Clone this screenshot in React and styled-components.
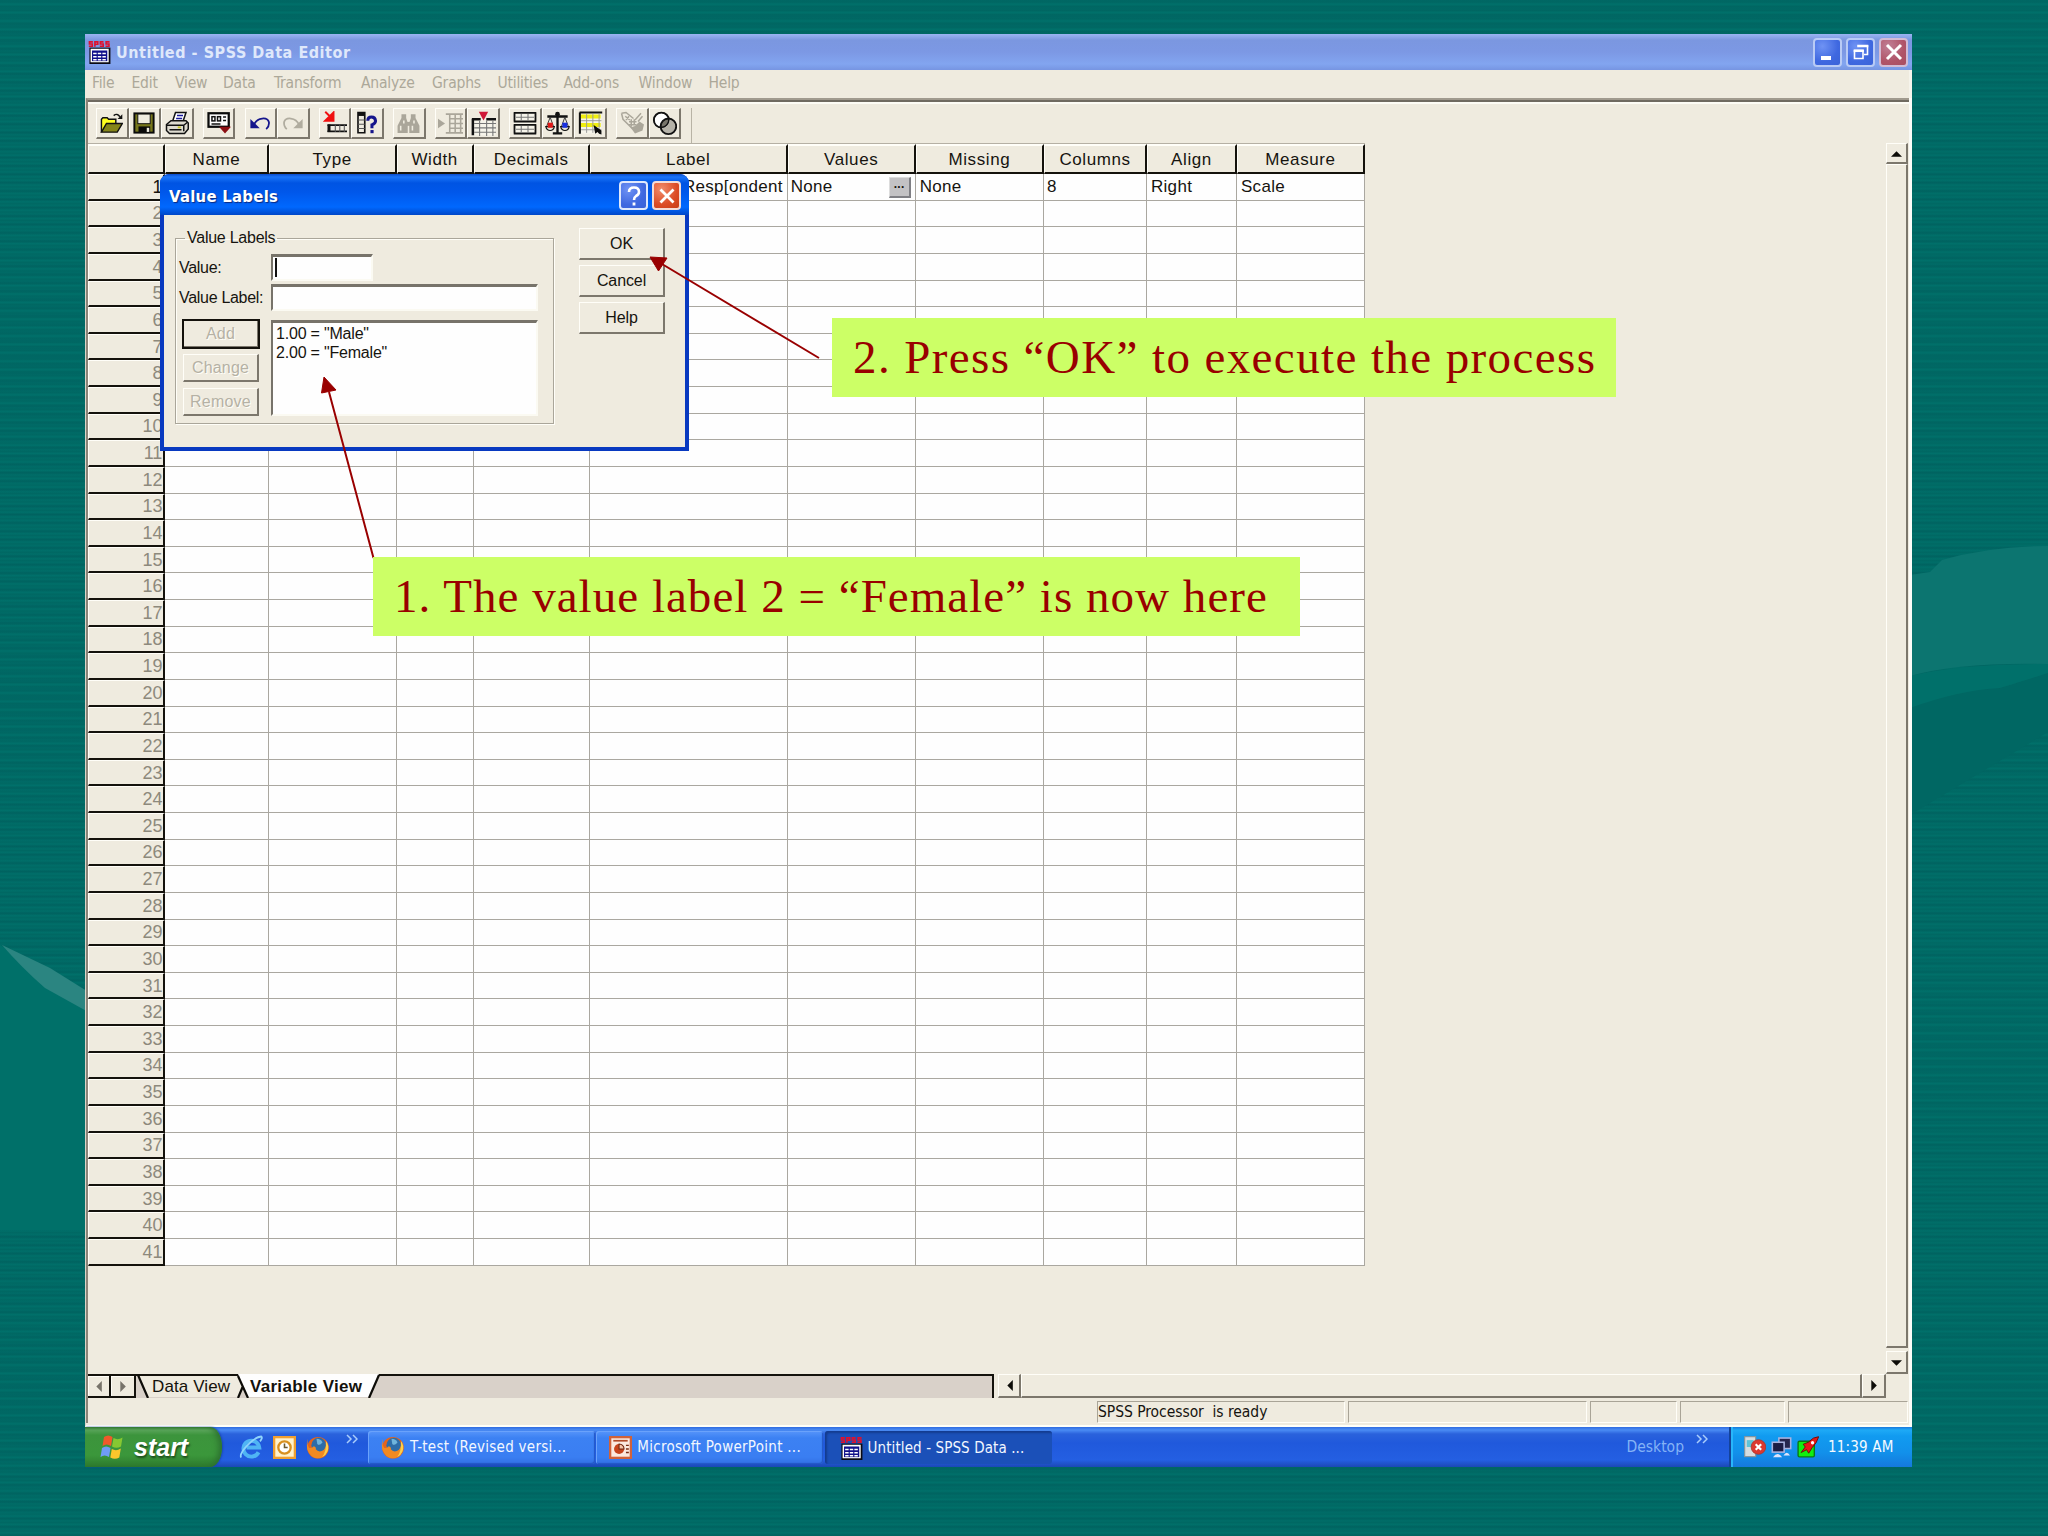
import React from 'react'
import styled, { createGlobalStyle, css } from 'styled-components'

const UI = '"DejaVu Sans Condensed", "DejaVu Sans", "Noto Sans", sans-serif'
const ARIAL = '"Liberation Sans", Arial, sans-serif'
const FACE = '#efebdf'

const GlobalStyle = createGlobalStyle`
  * { box-sizing: border-box; }
  body { margin: 0; background: #006b66; overflow: hidden; }
`

const raised = css`
  background: ${FACE};
  border: solid;
  border-width: 1px 2px 2px 1px;
  border-color: #fffef8 #7c776c #7c776c #fffef8;
`

const sunken = css`
  background: #fefefe;
  border: solid;
  border-width: 3px 2px 2px 2px;
  border-color: #77736a #fbfaf2 #fbfaf2 #77736a;
`

/* ---------- slide ---------- */

const Slide = styled.div`
  position: relative;
  width: 2048px;
  height: 1536px;
  padding: 34px 136px 0 85px;
  overflow: hidden;
  background:
    repeating-linear-gradient(180deg, rgba(0, 92, 92, 0.45) 0, rgba(0, 92, 92, 0) 3px 5.5px, rgba(0, 92, 92, 0.45) 8.3px),
    repeating-linear-gradient(180deg, #00706a 0, #006863 2.1px, #00706a 4.2px);
`

const Swoosh = styled.svg`
  position: absolute;
  left: 0;
  top: 0;
`

const Screen = styled.div`
  position: relative;
  width: 1827px;
  height: 1433px;
  display: flex;
  flex-direction: column;
`

/* ---------- main window ---------- */

const TitleBar = styled.div`
  height: 36px;
  display: flex;
  align-items: center;
  gap: 4px;
  padding: 0 4px 0 3px;
  background: linear-gradient(#9ab4f2 0, #7b97e0 6px, #7c98e4 18px, #82a5f0 30px, #7795e2 36px);
`

const TitleText = styled.div`
  flex: 1;
  padding-left: 1px;
  font: bold 16px ${UI};
  letter-spacing: 0.55px;
  color: #dfe8fb;
`

const CaptionButton = styled.div`
  width: 29px;
  height: 29px;
  border-radius: 4px;
  border: 2px solid ${p => p.$edge || '#b9cbf5'};
  background: ${p => p.$fill};
  display: flex;
  align-items: center;
  justify-content: center;
`

const MenuBar = styled.div`
  height: 28px;
  padding-bottom: 2px;
  background: ${FACE};
  display: flex;
  align-items: center;
  border-right: 3px solid #f6f4ec;
`

const MenuItem = styled.div`
  width: ${p => p.$w}px;
  font: 15.5px ${UI};
  letter-spacing: -0.2px;
  color: #aca899;
  &:first-child { margin-left: 7px; }
`

const Frame = styled.div`
  height: 1329px;
  background: ${FACE};
  border-left: 1px solid #d9d5c8;
  border-right: 3px solid #fcfcf8;
  border-bottom: 2px solid #fffff8;
  display: flex;
  flex-direction: column;
`

const Inner = styled.div`
  border-top: 2px solid #a09a8e;
  border-left: 2px solid #8a8478;
  box-shadow: inset 0 2px 0 #6f6a60, inset 0 4px 0 #fdfcf5;
  height: 1325px;
  display: flex;
  flex-direction: column;
`

const Toolbar = styled.div`
  height: 44px;
  padding: 8px 0 0 8px;
  display: flex;
`

const ToolGroups = styled.div`
  display: flex;
  gap: 9.1px;
  width: 596px;
  height: 36px;
  border-right: 1px solid #b8b3a5;
`

const ToolGroup = styled.div`
  display: flex;
`

const ToolButton = styled.div`
  ${raised}
  width: 32.6px;
  height: 31px;
  display: flex;
  align-items: center;
  justify-content: center;
`

const Body = styled.div`
  height: 1231px;
  display: flex;
  justify-content: space-between;
`

const Sheet = styled.div`
  width: 1280px;
`

const Row = styled.div`
  display: grid;
  grid-template-columns: 77.3px 103.4px 128px 77px 116px 198px 128px 128.4px 102.9px 90px 128px;
  height: ${p => p.$h}px;
`

const HeadCell = styled.div`
  background: ${FACE};
  border: solid;
  border-width: 2px 2px 2px 1px;
  border-color: #fffef8 #14120c #14120c #fffef8;
  box-shadow: 0 -1px 0 #b5b0a4;
  padding-top: 2px;
  display: flex;
  align-items: center;
  justify-content: center;
  font: 17px ${ARIAL};
  letter-spacing: 0.6px;
  color: #16140f;
`

const RowHead = styled.div`
  background: ${FACE};
  border: solid;
  border-width: 1px 2px 2px 1px;
  border-color: #fffef8 #14120c #14120c #fffef8;
  padding: 1px 1px 0 0;
  display: flex;
  align-items: center;
  justify-content: flex-end;
  font: 18px ${ARIAL};
  letter-spacing: -0.1px;
  color: ${p => (p.$active ? '#16140f' : '#8d897c')};
`

const Cell = styled.div`
  background: #fefefe;
  border-right: 1.5px solid #aaa7a0;
  border-bottom: 1.5px solid #aaa7a0;
  padding: 1px 4px 0 ${p => p.$pad || 3}px;
  display: flex;
  align-items: center;
  justify-content: ${p => (p.$end ? 'flex-end' : 'space-between')};
  font: 17px ${ARIAL};
  letter-spacing: 0.3px;
  color: #16140f;
`

const Ellipsis = styled.div`
  width: 22px;
  height: 21px;
  background: #c3c2c4;
  border: solid;
  border-width: 1px 2px 2px 1px;
  border-color: #dcdcdc #7f7f84 #7f7f84 #dcdcdc;
  font: bold 12px/13px ${ARIAL};
  text-align: center;
`

const VScroll = styled.div`
  width: 22px;
  margin: -1px 1px 0 0;
  display: flex;
  flex-direction: column;
`

const ScrollPart = styled.div`
  ${raised}
  display: flex;
  align-items: center;
  justify-content: center;
  width: ${p => (p.$w ? p.$w + 'px' : 'auto')};
  height: ${p => (p.$h ? p.$h + 'px' : 'auto')};
  flex: ${p => (p.$grow ? 1 : 'none')};
  margin-bottom: ${p => p.$mb || 0}px;
`

const SheetBar = styled.div`
  height: 24px;
  display: flex;
`

const NavButton = styled.div`
  width: ${p => p.$w}px;
  height: 24px;
  background: ${FACE};
  border: solid #14120c;
  border-width: 2px 2px 2px 0;
  box-shadow: inset 1px 1px 0 #fffef8;
  display: flex;
  align-items: center;
  justify-content: center;
`

const TabStrip = styled.div`
  position: relative;
  width: 858px;
  background: #d9d1c9;
  border-top: 2px solid #14120c;
  border-right: 2px solid #14120c;
  display: flex;
`

const TabShapes = styled.svg`
  position: absolute;
  left: 0;
  top: -2px;
`

const Tab = styled.div`
  position: relative;
  padding-left: ${p => p.$pad}px;
  width: ${p => p.$w}px;
  font: ${p => (p.$active ? 'bold' : 'normal')} 17px/22px ${ARIAL};
  letter-spacing: ${p => (p.$active ? 0.3 : 0.1)}px;
  white-space: nowrap;
  color: #14120c;
`

const HScroll = styled.div`
  display: flex;
  margin-left: 4px;
  width: 888px;
`

const StatusBar = styled.div`
  margin-top: 3px;
  padding-left: 1009px;
  display: flex;
  gap: 3px;
  height: 22px;
`

const StatusPanel = styled.div`
  width: ${p => p.$w}px;
  border: solid;
  border-width: 1.5px;
  border-color: #a9a497 #fffef8 #fffef8 #a9a497;
  font: 15.5px/20px ${UI};
  letter-spacing: -0.05px;
  color: #16140f;
  white-space: pre;
`

/* ---------- taskbar ---------- */

const TaskBar = styled.div`
  height: 40px;
  display: flex;
  background: linear-gradient(#2f6be0 0, #4a8cf4 3px, #2a62dc 7px, #2059dc 16px, #245fe2 33px, #1b48b4 40px);
`

const StartButton = styled.div`
  width: 137px;
  padding: 0 0 0 14px;
  display: flex;
  align-items: center;
  gap: 7px;
  border-radius: 0 12px 12px 0 / 0 20px 20px 0;
  background: linear-gradient(#337a33 0, #5ba65b 3px, #3c943c 8px, #3b973b 28px, #2d7a2d 40px);
  box-shadow: inset -5px 0 6px -2px #2c6f2f, 1px 0 2px #1a46ac;
  font: italic bold 25px ${ARIAL};
  color: #fff;
  text-shadow: 1px 2px 2px #1d4c1d;
`

const QuickLaunch = styled.div`
  width: 146px;
  padding-left: 17px;
  display: flex;
  align-items: center;
  gap: 10px;
`

const Chevrons = styled.svg`
  margin: 0 0 16px ${p => p.$ml}px;
`

const Task = styled.div`
  width: 227px;
  height: 33px;
  margin: 4px 1.3px 0 0;
  padding: ${p => (p.$active ? '1px 0 0 15px' : '0 0 1px 13px')};
  display: flex;
  align-items: center;
  gap: 5px;
  border-radius: 3px;
  background: ${p => (p.$active ? '#1b50b8' : 'linear-gradient(#5795fa 0, #3c81f3 7px, #3a7ef2 26px, #3270e4 33px)')};
  box-shadow: ${p => (p.$active ? 'inset 2px 2px 2px #143c90' : 'inset 1px 1px 0 #6aa2fb, inset -1px -1px 1px #2357c6')};
  font: 15px ${UI};
  letter-spacing: ${p => p.$ls || 0.28}px;
  color: #f2f7ff;
  white-space: nowrap;
`

const DeskLabel = styled.div`
  flex: 1;
  display: flex;
  align-items: center;
  justify-content: flex-end;
  padding-right: 21px;
  font: 15.5px ${UI};
  color: #84b3f6;
`

const Tray = styled.div`
  width: 183px;
  display: flex;
  align-items: center;
  gap: 5px;
  padding-left: 13px;
  border-left: 2px solid #14439a;
  background: linear-gradient(#1a78dc 0, #1eaaf6 3px, #119bf0 9px, #1290ea 26px, #1578dc 40px);
  box-shadow: inset 2px 0 0 #28b6fa;
  font: 15px ${UI};
  letter-spacing: 0.2px;
  color: #f4faff;
  white-space: nowrap;
  span { margin-left: 4px; }
`

/* ---------- dialog ---------- */

const Dialog = styled.div`
  position: absolute;
  left: 75px;
  top: 140px;
  width: 529px;
  height: 277px;
  border-radius: 9px 9px 0 0;
  background: #0839c0;
  padding: 0 4px 4px;
`

const DialogTitle = styled.div`
  height: 41px;
  margin: 0 -4px;
  padding: 2px 8px 0 9px;
  display: flex;
  align-items: center;
  gap: 4px;
  border-radius: 9px 9px 0 0;
  background: linear-gradient(#0a4ccc 0, #1a74f8 3px, #0054e3 9px, #0057ea 18px, #0068fe 33px, #0047c8 41px);
  font: bold 16.5px ${UI};
  letter-spacing: 0.3px;
  color: #fff;
  text-shadow: 1px 1px 1px #0a2a80;
  span { flex: 1; padding-top: 2px; }
`

const DialogBody = styled.div`
  height: 232px;
  background: ${FACE};
  display: flex;
  padding: 14px 0 0 11px;
`

const Group = styled.fieldset`
  position: relative;
  width: 379px;
  height: 195px;
  margin: 0 25px 0 0;
  padding: 7px 14px 0 3px;
  border: 1px solid #aaa69a;
  box-shadow: 1px 1px 0 #fffef8, inset 1px 1px 0 #fffef8;
  min-width: 0;
  font: 16px ${ARIAL};
  color: #16140f;

  legend {
    margin-left: 6px;
    padding: 0 2px;
    line-height: 18px;
    letter-spacing: -0.25px;
  }
`

const Field = styled.label`
  display: grid;
  grid-template-columns: 92px auto;
  justify-content: start;
  align-items: center;
  height: 27px;
  margin-bottom: 3px;
  letter-spacing: -0.3px;
`

const TextBox = styled.div`
  ${sunken}
  width: ${p => p.$w}px;
  height: 27px;
  padding: 1px 2px;
`

const Caret = styled.div`
  width: 1.5px;
  height: 19px;
  background: #111;
`

const ListArea = styled.div`
  display: flex;
  gap: 12px;
  margin: 9px 0 0 4px;
`

const ButtonStack = styled.div`
  display: flex;
  flex-direction: column;
  gap: ${p => p.$gap}px;
  margin-top: ${p => p.$mt || 0}px;
`

const Button = styled.div`
  ${raised}
  width: ${p => p.$w || 76}px;
  height: ${p => p.$h || 28}px;
  display: flex;
  align-items: center;
  justify-content: center;
  font: 16px ${ARIAL};
  letter-spacing: ${p => (p.$disabled ? 0.2 : -0.1)}px;
  color: ${p => (p.$disabled ? '#b5b1a4' : '#16140f')};
  text-shadow: ${p => (p.$disabled ? '1px 1px 0 #fffef8' : 'none')};
  outline: ${p => (p.$default ? '2px solid #14120c' : 'none')};
  outline-offset: -1px;
`

const ListBox = styled.div`
  ${sunken}
  width: 267px;
  height: 96px;
  padding: 2px 3px;
  font: 16px/18.5px ${ARIAL};
  letter-spacing: -0.2px;
`

/* ---------- annotations ---------- */

const Callout = styled.div`
  position: absolute;
  left: ${p => p.$x}px;
  top: ${p => p.$y}px;
  width: ${p => p.$w}px;
  height: 79px;
  padding-left: 21px;
  background: #ccff66;
  color: #990000;
  font: 47px/79px "Liberation Serif", serif;
  letter-spacing: ${p => p.$ls}px;
  white-space: nowrap;
`

const Arrows = styled.svg`
  position: absolute;
  left: 0;
  top: 0;
`

/* ---------- icons ---------- */

const Icon = ({ s = 22, children, ...rest }) => (
  <svg width={s} height={s} viewBox="0 0 16 16" {...rest}>
    {children}
  </svg>
)

const Tri = ({ dir, color = '#0d0c08' }) => {
  const d = {
    up: 'M0 8 L5 3 L10 8Z',
    down: 'M0 3 L10 3 L5 8Z',
    left: 'M3 5 L8 0 L8 10Z',
    right: 'M3 0 L8 5 L3 10Z',
  }[dir]
  return (
    <svg width="11" height="11" viewBox="0 0 10 10">
      <path d={d} fill={color} />
    </svg>
  )
}

const SpssIcon = ({ s = 23 }) => (
  <Icon s={s}>
    <path d="M3.4 .6H1v1.5h2v1.6H.6M4.8 4V.6h2v1.7h-2M10.8 .6H8.6v1.5h2v1.6H8.2M15 .6h-2.4v1.5h2v1.6h-2.4" fill="none" stroke="#e0102c" strokeWidth="1.1" />
    <rect x="1" y="4.6" width="14.6" height="11.4" fill="#0a0a14" />
    <rect x="1.8" y="5.4" width="12.6" height="9.4" fill="#fff" />
    <rect x="2.8" y="6.6" width="10.6" height="7.4" fill="#10108a" />
    <path d="M3.6 8.7h9M3.6 10.9h9M3.6 13h9" stroke="#fff" strokeWidth="1.1" strokeDasharray="2.4 .8" />
  </Icon>
)

const OpenIcon = () => (
  <Icon s={23}>
    <path d="M1 14V5l1-1h3l1 1h5v3" fill="#ffff20" stroke="#111" />
    <path d="M1 14l3.5-6H15.5L12 14Z" fill="#85851a" stroke="#111" />
    <path d="M9.5 2.5q2.5-2 4.3.8" fill="none" stroke="#111" />
    <path d="M15.5 1.5v3.3h-3.3z" fill="#111" />
  </Icon>
)

const SaveIcon = () => (
  <Icon>
    <rect x="1" y="1" width="14" height="14" fill="#77771c" stroke="#0a0a0a" strokeWidth="1.4" />
    <rect x="3.5" y="1.5" width="9" height="7" fill="#efece0" stroke="#111" strokeWidth=".7" />
    <rect x="4" y="10.5" width="8.5" height="4.8" fill="#0a0a0a" />
    <rect x="10" y="11.5" width="1.8" height="3" fill="#efece0" />
  </Icon>
)

const PrintIcon = () => (
  <Icon s={24}>
    <path d="M5 7L7 1h7l-2 6Z" fill="#fff" stroke="#111" />
    <path d="M8 3h4M7.4 5h4" stroke="#1a1a9a" />
    <path d="M1 9l3-2.5h10l1.5 1.5v4L13 15H3l-2-2Z" fill="#dedbd0" stroke="#111" />
    <path d="M1 9.5h11.5v4M12.5 9.5L15 7.5M3 12.5h8" fill="none" stroke="#111" />
    <rect x="8.5" y="10.3" width="2" height="1.2" fill="#c8c820" />
  </Icon>
)

const RecallIcon = () => (
  <Icon s={24}>
    <rect x="1" y="1.5" width="13.5" height="9" fill="#fff" stroke="#0a0a0a" strokeWidth="1.5" />
    <rect x="3.3" y="3.8" width="2" height="2.8" fill="none" stroke="#111" />
    <rect x="7" y="3.8" width="2" height="2.8" fill="none" stroke="#111" />
    <path d="M10.7 4h2M10.7 6.3h2M3 8.6h6" stroke="#111" />
    <path d="M8 10.5h8L12 15Z" fill="#8c0f14" />
  </Icon>
)

const UndoIcon = ({ color = '#15158c', flip }) => (
  <Icon style={{ transform: flip ? 'scaleX(-1)' : 'none' }}>
    <path d="M3.5 9.5C6 3.5 13.500 3.500 14.500 7.500Q14.800 10.500 12.500 12.500" fill="none" stroke={color} strokeWidth="1.3" />
    <path d="M1 5v6.800h6.800Z" fill={color} />
  </Icon>
)

const GotoCaseIcon = () => (
  <Icon s={24}>
    <path d="M1.500 .5L6 5M7 1v5.500H1.500Z" stroke="#f01010" strokeWidth="1.300" fill="#f01010" />
    <rect x="3" y="9" width="13" height="5" fill="#efece0" />
    <path d="M3 9.400h13M3 13.600h13" stroke="#111" strokeWidth="1.200" />
    <rect x="3" y="9" width="2" height="5" fill="#111" />
    <path d="M8.200 9v5M11.200 9v5M14.200 9v5" stroke="#555" strokeWidth=".7" />
  </Icon>
)

const VarInfoIcon = () => (
  <Icon s={24}>
    <path d="M2 1h4.500v13.500H2Z" fill="#efece0" stroke="#111" strokeWidth="1.100" />
    <rect x="2" y="1" width="4.500" height="2.300" fill="#111" />
    <path d="M2 6h4.500M2 8.800h4.500M2 11.600h4.500" stroke="#555" strokeWidth=".7" />
    <path d="M8.500 6.500Q8.500 4 11 4t2.700 2.600Q13.700 8.200 11.300 9.200V11.500" stroke="#15158c" strokeWidth="2" fill="none" />
    <rect x="10.300" y="12.700" width="2.100" height="2.100" fill="#15158c" />
  </Icon>
)

const FindIcon = () => (
  <Icon s={25}>
    <path d="M3.500 2h3v2.500l1 3V14H1V9.500L3.500 4.500ZM9.500 2h3v2.500L15 9.500V14H8.500V7.500l1-3Z" fill="#aaa69a" />
    <path d="M7 7h2v2.500H7Z" fill="#aaa69a" />
    <path d="M3 9.500v3M5 6v2M10.500 9.500v3M11.500 6v2" stroke="#efece0" />
  </Icon>
)

const InsertCaseIcon = () => (
  <Icon s={25}>
    <path d="M0 5l4.500 3L0 11Z" fill="#aaa69a" />
    <path d="M5 2h11M7 5h9M7 8h9M7 11h9M5 14h11M7.500 2v12M11 2v12M14.500 2v12" stroke="#aaa69a" strokeWidth="1" />
  </Icon>
)

const InsertVarIcon = () => (
  <Icon s={25}>
    <rect x="1" y="5" width="14.500" height="10.500" fill="#f6f4ea" />
    <path d="M.6 5.200H6.200M9.800 5.200H16M1.200 5v10.500" stroke="#111" strokeWidth="1.600" />
    <path d="M2 8h14M2 10.800h14M2 13.600h14M5.500 6v10M10 6v10M14 6v10" stroke="#777" strokeWidth=".7" />
    <path d="M5 .5h6L8 6Z" fill="#d01838" />
  </Icon>
)

const SplitIcon = () => (
  <Icon s={24}>
    <rect x=".5" y=".8" width="15" height="14.400" fill="#f6f4ea" />
    <path d="M.5 1.200h15M.5 7h15M.5 9.200h15M.5 15h15M1 1v6M1 9v6M15 1v6M15 9v6" stroke="#111" strokeWidth="1.200" />
    <path d="M2 4.100h12M2 12.100h12M5.500 2v4.500M10 2v4.500M5.500 10v4.500M10 10v4.500" stroke="#777" strokeWidth=".7" />
  </Icon>
)

const WeightIcon = () => (
  <Icon s={25}>
    <path d="M8 1v13M1.500 3.500h13M5 14.300h6" stroke="#111" strokeWidth="1.500" />
    <circle cx="8" cy="2" r="1.500" fill="#111" />
    <path d="M3.300 4L1 10M3.300 4l2.200 6M12.700 4l-2.200 6M12.700 4L15 10" stroke="#333" strokeWidth=".6" />
    <path d="M.5 10h5.500q-.5 2.500-2.700 2.500T.5 10ZM10 10h5.500q-.5 2.500-2.700 2.500T10 10Z" fill="#e8e5d8" stroke="#111" strokeWidth=".7" />
    <rect x="1.800" y="7.500" width="3.200" height="3.200" fill="#e01818" />
    <rect x="11.100" y="7.500" width="3.200" height="3.200" fill="#1830e0" />
  </Icon>
)

const SelectIcon = () => (
  <Icon s={25}>
    <rect x="1" y="1" width="14" height="13.500" fill="#f6f4ea" />
    <path d="M1.500 3.500h13M1.500 9h13" stroke="#f0ee10" strokeWidth="2.600" />
    <path d="M1 1h14.500M1.200 1v13.500" stroke="#111" strokeWidth="1.300" />
    <path d="M2 6.200h13M2 12h13M5.500 2v12M9.500 2v12M13.500 2v12" stroke="#999" strokeWidth=".6" />
    <path d="M10 9l5 3.500V15l-1.500-.5-1-1-1.500 1Z" fill="#0a0a0a" />
  </Icon>
)

const LabelsIcon = () => (
  <Icon s={24}>
    <path d="M1 1.500l3-.5 5 4M1 1.500l1 4 6 6M10 6l4-4.500M12 7l3-3.500" stroke="#aaa69a" strokeWidth="1" fill="none" />
    <path d="M7 11l3 4 5-2 1-4-3-2-3 3Z" fill="#aaa69a" />
    <path d="M3.500 3.500l3 2.500M4 6l2-2.500M7.500 5.500v5M9.500 5.500v4M6 7.200h5M6 9.200h5" stroke="#aaa69a" />
  </Icon>
)

const SetsIcon = () => (
  <Icon s={25}>
    <circle cx="6" cy="5.800" r="4.800" fill="#fff" stroke="#111" strokeWidth="1.200" />
    <circle cx="10.500" cy="9.800" r="5" fill="#b5b2a8" stroke="#111" strokeWidth="1.200" />
    <path d="M10.700 5A5 5 0 0 0 5.700 10.500A5 5 0 0 0 10.700 5Z" fill="#77746a" stroke="#111" strokeWidth=".8" />
    <circle cx="6" cy="5.800" r="4.800" fill="none" stroke="#111" strokeWidth=".6" />
  </Icon>
)

const FlagIcon = () => (
  <svg width="28" height="28" viewBox="0 0 28 28">
    <path d="M5 4q4-3 8.500 0l-1.500 9q-4.500-3-8.500 0Z" fill="#f0592a" />
    <path d="M14.500 5q4.500 2.500 9-.5l-1.500 9q-4.500 2.500-9 0Z" fill="#86c832" />
    <path d="M3 15q4-3 8.500 0l-1.500 9q-4.500-3-8.500 0Z" fill="#6f9cf6" />
    <path d="M12.800 16q4.500 2.500 9-.5l-1.500 9q-4.500 2.500-9 0Z" fill="#fbc62c" />
  </svg>
)

const IeIcon = () => (
  <Icon s={24}>
    <path d="M13 11.500A5.300 5.300 0 1 1 13.500 8.300H5" fill="none" stroke="#4fb4f4" strokeWidth="2.600" />
    <path d="M1.500 15C-.5 12.500 9 1.500 14.800 1q1.200.8-.8 3.200" fill="none" stroke="#8fd4fb" strokeWidth="1.200" />
  </Icon>
)

const OutlookIcon = () => (
  <Icon s={23}>
    <rect x=".8" y=".8" width="14.400" height="14.400" fill="#fff2cc" stroke="#f0a030" strokeWidth="1.600" />
    <circle cx="8" cy="8" r="4.300" fill="#fff" stroke="#d89020" strokeWidth="1.600" />
    <path d="M8 5.300V8h2.200" fill="none" stroke="#6b5a30" strokeWidth="1.100" />
  </Icon>
)

const FirefoxIcon = () => (
  <Icon s={24}>
    <circle cx="8" cy="8.500" r="7.200" fill="#e4641c" />
    <circle cx="8.500" cy="6.800" r="4.900" fill="#2d6ca8" />
    <path d="M7 2.500q3 0 4 2.500-2 2.500-3.500 1Z" fill="#6fb4dc" />
    <path d="M1.200 2.500Q.5 6 2 8.500q2 .5 3.200-1Q7 8 6.500 9.500q1.500 2 4 1.200 3-1 2.800-5.700 2 3 .8 6.500-2 4-6.500 4T.8 9.500Q.2 5 1.200 2.500Z" fill="#f18a22" />
    <path d="M13.300 4q2.500 3 1 7-1 2.500-3.500 3.700 3-4 2.500-10.700Z" fill="#fbd04a" />
  </Icon>
)

const PptIcon = () => (
  <Icon s={23}>
    <rect x=".8" y=".8" width="14.400" height="14.400" fill="#fbe9df" stroke="#d0623a" strokeWidth="1.600" />
    <path d="M3 3.300h10" stroke="#b04a28" strokeWidth="1.200" />
    <circle cx="7" cy="9" r="3.500" fill="#c8441c" />
    <path d="M7 9V5.500A3.500 3.500 0 0 1 10.500 9Z" fill="#f6c4a8" stroke="#6b2410" strokeWidth=".7" />
    <path d="M11.800 6.500h2M11.800 9h2M11.800 11.500h2" stroke="#7a2d14" />
  </Icon>
)

const SecurityIcon = () => (
  <Icon s={22}>
    <rect x=".5" y=".5" width="8" height="14.500" fill="#d6dde0" stroke="#8a9498" strokeWidth=".8" />
    <rect x="2" y="3" width="5" height="5" fill="#5fc4d8" />
    <circle cx="10.500" cy="8" r="5.300" fill="#dc3830" stroke="#a8382e" strokeWidth=".6" />
    <path d="M8.500 6l4 4M12.500 6l-4 4" stroke="#fff" strokeWidth="1.600" />
  </Icon>
)

const NetworkIcon = () => (
  <Icon s={21}>
    <rect x="6" y=".8" width="9" height="8" fill="#26264e" stroke="#a8b2e0" strokeWidth="1.200" />
    <rect x="1" y="4" width="9" height="7.500" fill="#1c1c44" stroke="#a8b2e0" strokeWidth="1.200" />
    <path d="M1.500 15.500q3.500-5 7 0ZM9.500 14q2.500-4 5 0Z" fill="#dfe4fa" />
  </Icon>
)

const RocketIcon = () => (
  <Icon s={22}>
    <rect x=".8" y="3.800" width="11.800" height="11.400" rx="1" fill="#10f010" stroke="#0a7a14" />
    <path d="M15.800.5q-4 0-7.500 4L4.500 6 6 8l-3 4 4-2 1.500 2.500L11 8.500q3.500-3.500 4.800-8Z" fill="#e81818" stroke="#5a0808" strokeWidth=".6" />
    <circle cx="11.300" cy="4.900" r="1.200" fill="#fff" />
  </Icon>
)

const More = ({ ml = 0 }) => (
  <Chevrons $ml={ml} width="12" height="10" viewBox="0 0 12 10">
    <path d="M1 1l4 4-4 4M7 1l4 4-4 4" fill="none" stroke="#a9cdfc" strokeWidth="1.500" />
  </Chevrons>
)

/* ---------- data ---------- */

const menus = [
  ['File', 39.5], ['Edit', 43.5], ['View', 48], ['Data', 51], ['Transform', 87], ['Analyze', 71],
  ['Graphs', 65.5], ['Utilities', 66], ['Add-ons', 75], ['Window', 70], ['Help', 40],
]

const tools = [
  [OpenIcon, SaveIcon, PrintIcon],
  [RecallIcon],
  [UndoIcon, () => <UndoIcon color="#b0ac9f" flip />],
  [GotoCaseIcon, VarInfoIcon],
  [FindIcon],
  [InsertCaseIcon, InsertVarIcon],
  [SplitIcon, WeightIcon, SelectIcon],
  [LabelsIcon, SetsIcon],
]

const columns = ['Name', 'Type', 'Width', 'Decimals', 'Label', 'Values', 'Missing', 'Columns', 'Align', 'Measure']
const firstRow = ['', '', '', '', 'Resp[ondent', 'None', 'None', '8', 'Right', 'Scale']
const rows = Array.from({ length: 41 }, (_, i) => i + 1)

const blue = 'radial-gradient(circle at 30% 25%, #6f93f4, #3f68e0 60%, #3a63d8)'
const red = 'radial-gradient(circle at 30% 25%, #c08096, #b05468 60%, #a84e62)'

/* ---------- parts ---------- */

const VariableSheet = () => (
  <Sheet>
    <Row $h={30}>
      <HeadCell />
      {columns.map(c => <HeadCell key={c}>{c}</HeadCell>)}
    </Row>
    {rows.map(n => (
      <Row key={n} $h={26.63}>
        <RowHead $active={n === 1}>{n}</RowHead>
        {columns.map((c, i) => (
          <Cell key={c} $end={c === 'Label'} $pad={c === 'Align' || c === 'Missing' || c === 'Measure' ? 4 : 3}>
            {n === 1 && firstRow[i]}
            {n === 1 && c === 'Values' && <Ellipsis>...</Ellipsis>}
          </Cell>
        ))}
      </Row>
    ))}
  </Sheet>
)

const ValueLabelsDialog = () => (
  <Dialog>
    <DialogTitle>
      <span>Value Labels</span>
      <CaptionButton $edge="#dfe8fc" $fill={blue}>
        <svg width="18" height="22" viewBox="0 0 18 22">
          <path d="M4 7Q4 2.500 9 2.500T14 7Q14 9.500 11 11 9 12.200 9 15" fill="none" stroke="#fff" strokeWidth="2.600" />
          <rect x="7.600" y="17.500" width="2.800" height="3" fill="#fff" />
        </svg>
      </CaptionButton>
      <CaptionButton $edge="#f4dcd6" $fill="radial-gradient(circle at 30% 25%, #f08c6c, #dc4c26 60%, #c83e18)">
        <svg width="18" height="18" viewBox="0 0 18 18">
          <path d="M2.500 2.500l13 13M15.500 2.500l-13 13" stroke="#fff" strokeWidth="2.800" />
        </svg>
      </CaptionButton>
    </DialogTitle>
    <DialogBody>
      <Group>
        <legend>Value Labels</legend>
        <Field>
          Value:
          <TextBox $w={102}><Caret /></TextBox>
        </Field>
        <Field>
          Value Label:
          <TextBox $w={267} />
        </Field>
        <ListArea>
          <ButtonStack $gap={6}>
            <Button $disabled $default>Add</Button>
            <Button $disabled>Change</Button>
            <Button $disabled>Remove</Button>
          </ButtonStack>
          <ListBox>
            <div>1.00 = "Male"</div>
            <div>2.00 = "Female"</div>
          </ListBox>
        </ListArea>
      </Group>
      <ButtonStack $gap={5} $mt={-1}>
        <Button $w={86} $h={32}>OK</Button>
        <Button $w={86} $h={32}>Cancel</Button>
        <Button $w={86} $h={32}>Help</Button>
      </ButtonStack>
    </DialogBody>
  </Dialog>
)

const App = () => (
  <Slide>
    <GlobalStyle />
    <Swoosh width="2048" height="1536">
      <path d="M0 945L85 990V1230H0Z" fill="#007069" />
      <path d="M2 945L50 968L90 993V1013L45 988Q22 968 2 945Z" fill="#2b8581" />
      <path d="M1910 707Q1960 690 2000 688L2048 673V732L1910 815Z" fill="#006763" />
      <path d="M1910 676Q1960 664 2048 664V673L2000 688Q1960 690 1910 708Z" fill="#00706a" />
      <path d="M1910 575L1930 572L1942 560Q1990 546 2048 546V664Q1960 662 1910 676Z" fill="#0c7570" />
    </Swoosh>
    <Screen>
      <TitleBar>
        <SpssIcon />
        <TitleText>Untitled - SPSS Data Editor</TitleText>
        <CaptionButton $fill={blue}>
          <svg width="20" height="20"><rect x="3" y="14" width="10" height="4" fill="#fff" /></svg>
        </CaptionButton>
        <CaptionButton $fill={blue}>
          <svg width="20" height="20" viewBox="0 0 20 20" fill="none" stroke="#fff" strokeWidth="1.600">
            <path d="M7 4H16.500V12.500H13M3.500 8.500H12V16.500H3.500Z" />
            <path d="M2.700 8.800H12.800M6.200 4H17.300" strokeWidth="2.400" />
          </svg>
        </CaptionButton>
        <CaptionButton $edge="#d3bcd4" $fill={red}>
          <svg width="18" height="18" viewBox="0 0 18 18">
            <path d="M2 2l14 14M16 2L2 16" stroke="#fff" strokeWidth="3" />
          </svg>
        </CaptionButton>
      </TitleBar>
      <MenuBar>
        {menus.map(([name, w]) => <MenuItem key={name} $w={w}>{name}</MenuItem>)}
      </MenuBar>
      <Frame>
        <Inner>
          <Toolbar>
            <ToolGroups>
              {tools.map((group, i) => (
                <ToolGroup key={i}>
                  {group.map((Glyph, j) => <ToolButton key={j}><Glyph /></ToolButton>)}
                </ToolGroup>
              ))}
            </ToolGroups>
          </Toolbar>
          <Body>
            <VariableSheet />
            <VScroll>
              <ScrollPart $h={21}><Tri dir="up" /></ScrollPart>
              <ScrollPart $grow $mb={3} />
              <ScrollPart $h={23}><Tri dir="down" /></ScrollPart>
            </VScroll>
          </Body>
          <SheetBar>
            <NavButton $w={23}><Tri dir="left" color="#77736a" /></NavButton>
            <NavButton $w={25}><Tri dir="right" color="#77736a" /></NavButton>
            <TabStrip>
              <TabShapes width="260" height="24">
                <path d="M2 2L12 23H103L112 2Z" fill={FACE} />
                <path d="M102 0H243L233 23H112Z" fill="#fefefe" />
                <path d="M2 1L12 24M102 2L112 24M107 12L102 24M243 1L233 24" stroke="#0d0c08" strokeWidth="2.200" fill="none" />
              </TabShapes>
              <Tab $w={103} $pad={16}>Data View</Tab>
              <Tab $w={140} $pad={11} $active>Variable View</Tab>
            </TabStrip>
            <HScroll>
              <ScrollPart $w={23}><Tri dir="left" /></ScrollPart>
              <ScrollPart $grow />
              <ScrollPart $w={24}><Tri dir="right" /></ScrollPart>
            </HScroll>
          </SheetBar>
          <StatusBar>
            <StatusPanel $w={248}>{'SPSS Processor  is ready'}</StatusPanel>
            <StatusPanel $w={239} />
            <StatusPanel $w={87} />
            <StatusPanel $w={105} />
            <StatusPanel $w={120} />
          </StatusBar>
        </Inner>
      </Frame>
      <TaskBar>
        <StartButton>
          <FlagIcon />
          start
        </StartButton>
        <QuickLaunch>
          <IeIcon />
          <OutlookIcon />
          <FirefoxIcon />
          <More ml={6} />
        </QuickLaunch>
        <Task><FirefoxIcon />T-test (Revised versi...</Task>
        <Task><PptIcon />Microsoft PowerPoint ...</Task>
        <Task $active $ls={0.1}><SpssIcon />Untitled - SPSS Data ...</Task>
        <DeskLabel>
          Desktop
          <More ml={12} />
        </DeskLabel>
        <Tray>
          <SecurityIcon />
          <NetworkIcon />
          <RocketIcon />
          <span>11:39 AM</span>
        </Tray>
      </TaskBar>
      <ValueLabelsDialog />
    </Screen>
    <Arrows width="2048" height="1536">
      <g stroke="#990000" strokeWidth="2" fill="#990000">
        <path d="M819 358L662 264M373.500 558L329 392" />
        <path d="M650 257L667 258L658.500 271ZM324 377L321.500 393L336 390Z" strokeWidth="1" />
      </g>
    </Arrows>
    <Callout $x={832} $y={318} $w={784} $ls={1.4}>2. Press “OK” to execute the process</Callout>
    <Callout $x={373} $y={557} $w={927} $ls={1.03}>1. The value label 2 = “Female” is now here</Callout>
  </Slide>
)

export default App
